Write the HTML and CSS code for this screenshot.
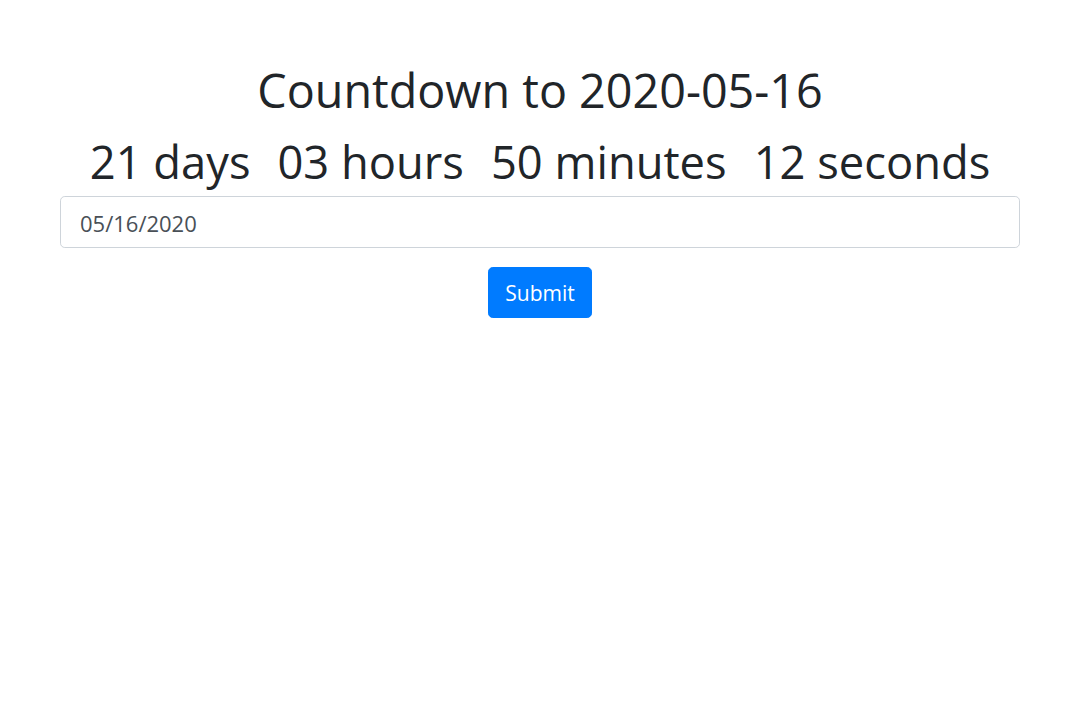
FILE: index.html
```html
<!DOCTYPE html>
<html lang="en">
<head>
<meta charset="utf-8">
<title>Countdown</title>
<link rel="stylesheet" href="styles.css">
</head>
<body>
<div class="container">
  <h1 class="title">Countdown to 2020-05-16</h1>
  <h2 class="timer"><span>21 days</span><span>03 hours</span><span>50 minutes</span><span>12 seconds</span></h2>
  <form class="form">
    <input class="date-input" type="text" value="05/16/2020">
    <button class="btn" type="button">Submit</button>
  </form>
</div>
</body>
</html>
```
FILE: styles.css
```css
html, body {
  margin: 0;
  padding: 0;
  background: #fff;
}
body {
  font-family: "Open Sans", "Noto Sans", sans-serif;
  color: #212529;
}
.container {
  width: 960px;
  margin: 0 auto;
  padding-top: 62px;
  text-align: center;
}
.title, .timer {
  font-weight: 400;
  line-height: 1.2;
  margin: 0;
}
.title {
  font-size: 46.7px;
  margin-bottom: 17px;
}
.timer {
  font-size: 45.3px;
  margin-bottom: 7px;
  display: flex;
  justify-content: center;
  gap: 27px;
}
.form {
  display: flex;
  flex-direction: column;
  align-items: center;
  gap: 19px;
}
.date-input {
  box-sizing: border-box;
  width: 100%;
  height: 52px;
  padding: 2px 19px 0;
  border: 1px solid #ced4da;
  border-radius: 4.8px;
  font-family: "Open Sans", "Noto Sans", sans-serif;
  font-size: 22px;
  color: #495057;
  background: #fff;
  outline: none;
}
.btn {
  box-sizing: border-box;
  width: 104px;
  height: 51px;
  border: 1px solid #007bff;
  border-radius: 4.8px;
  background: #007bff;
  color: #fff;
  font-family: "Open Sans", "Noto Sans", sans-serif;
  font-size: 21px;
  padding: 0;
}
```
